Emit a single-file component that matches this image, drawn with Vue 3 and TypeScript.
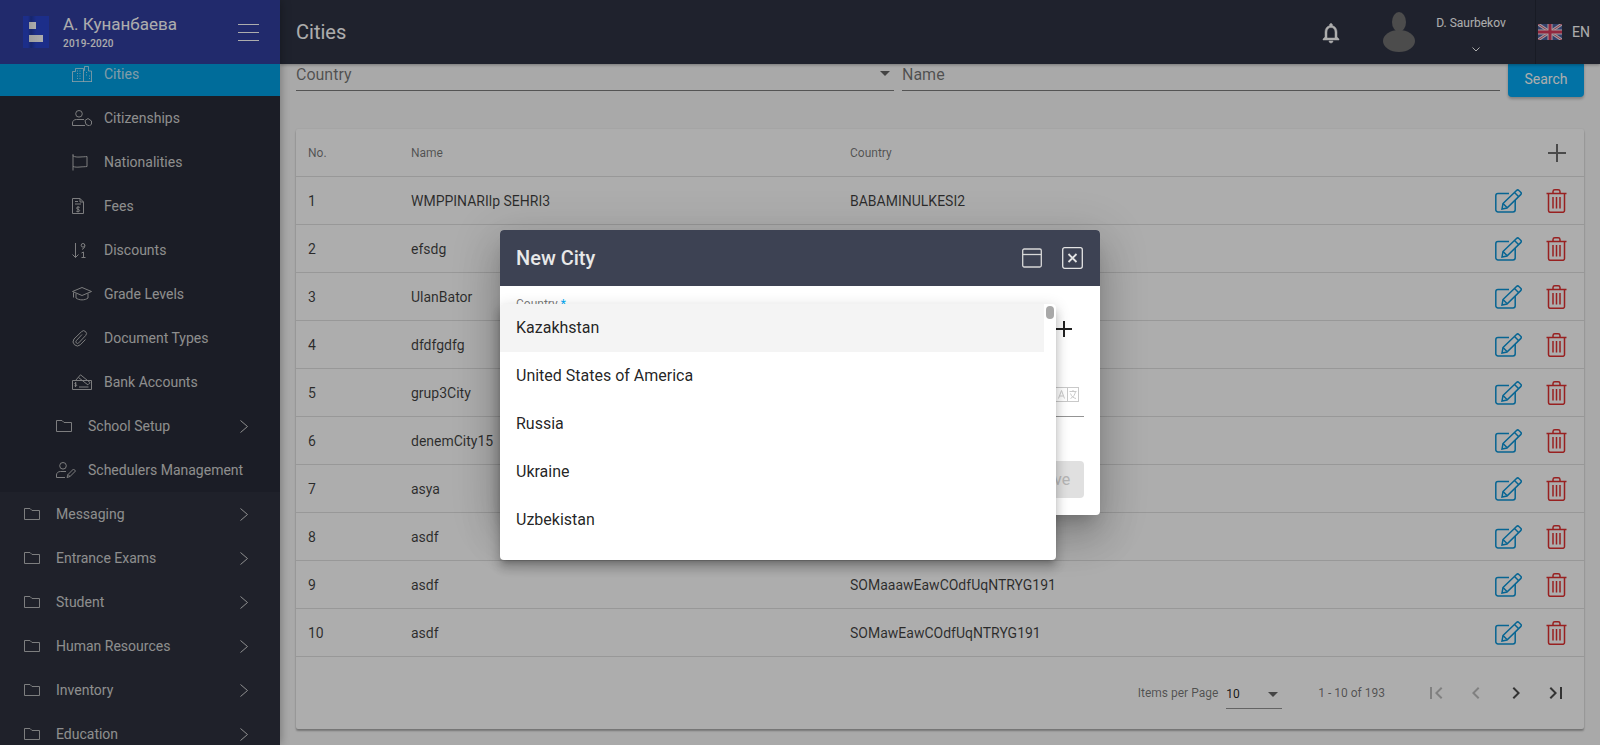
<script setup lang="ts">
interface NavItem {
  label: string;
  icon: string;
  level: number;
  arrow?: boolean;
  active?: boolean;
}

const iconPaths: Record<string, { box: string; w: number; h: number; d: string[] }> = {
  cities: {
    box: '0 0 20 16', w: 20, h: 16,
    d: ['M.5 16V5.5h3V2.5h8V16', 'M11.5 4.5h1V.5h4v4.5h3V16', 'M0 15.5h20', 'M5 5h1M7.5 5h1M5 7.5h1M7.5 7.5h1M5 10h1M7.5 10h1M5 12.5h1M7.5 12.5h1M14 6.5h1M14 9h1M17 10h1M17 12.5h1'],
  },
  citizen: {
    box: '0 0 20 16', w: 20, h: 16,
    d: ['M7 .5a3.3 3.3 0 1 1 0 6.6 3.3 3.3 0 0 1 0-6.6z', 'M12 9.5H4.5C2 9.5.5 11 .5 13v2.5H13', 'M13 10.5l3-2 3.5 2.5v3l-2 2-3.5-1.5z'],
  },
  flag: {
    box: '0 0 16 17', w: 16, h: 17,
    d: ['M1 .5v16', 'M.5 1h1', 'M1 2c2 1 4 1.200 7 1s5-.2 7-.5v10c-2 .3-4 .2-7 .5s-5 .2-7-.5'],
  },
  fees: {
    box: '0 0 12 16', w: 12, h: 16,
    d: ['M.5.5h7.500l3.500 3.500v11.500H.5z', 'M8 .5V4h3.500', 'M3 3.500h3M3 6h6', 'M7.800 9.500c-.5-.7-3.300-.8-3.300.6 0 1.500 3.300 1 3.200 2.600-.1 1.200-2.800 1.200-3.500.4M6 8.300v6'],
  },
  discounts: {
    box: '0 0 14 15', w: 14, h: 15,
    d: ['M3.500 0v14.500M.5 11.500l3 3 3-3', 'M11 .5a1.800 1.800 0 1 0 0 3.600 1.800 1.800 0 0 0 0-3.600zM12.800 2.300c0 2-1 3.700-2.800 4', 'M9.500 10l2-1v5.500M9.500 14.500h4'],
  },
  grade: {
    box: '0 0 20 14', w: 20, h: 14,
    d: ['M.5 4.500L10 .5l9.500 4-9.500 4z', 'M4 6.500v4.500c3 2.500 9 2.500 12 0V6.500', 'M1.500 5.500v5'],
  },
  clip: {
    box: '0 0 16 17', w: 16, h: 17,
    d: ['M10 4.500l-5.700 6.200a1.600 1.600 0 0 0 2.400 2.200l7-7.400a2.800 2.800 0 0 0-4.200-3.800L2 9a4.300 4.300 0 0 0 6.300 5.800l5.200-5.300'],
  },
  bank: {
    box: '0 0 20 16', w: 20, h: 16,
    d: ['M.5 6.500h19v9H.5z', 'M3.500 6.500L8.500.8l9.500 7.700-1.500 2', 'M6.500 3.500l9.500 7.500', 'M4.500 9c-.8-.4-2 .2-1.600 1 .4.800 2 .4 1.800 1.400-.2.800-1.500.8-2.200.3M3.500 8v5', 'M7 13h9.500'],
  },
  folder: {
    box: '0 0 16 12', w: 16, h: 12,
    d: ['M.5 11.500V.5h5.500l2 2h7.500v9z'],
  },
  scheduler: {
    box: '0 0 20 16', w: 20, h: 16,
    d: ['M7 .5a3.300 3.300 0 1 1 0 6.600 3.300 3.300 0 0 1 0-6.600z', 'M10 9.500H4.500C2 9.500.5 11 .5 13v2.500H9', 'M11 15.500l1-3 5.500-5.500 2 2-5.500 5.500z', 'M12 12.500l2 2'],
  },
};

const navItems: NavItem[] = [
  { label: 'Cities', icon: 'cities', level: 3, active: true },
  { label: 'Citizenships', icon: 'citizen', level: 3 },
  { label: 'Nationalities', icon: 'flag', level: 3 },
  { label: 'Fees', icon: 'fees', level: 3 },
  { label: 'Discounts', icon: 'discounts', level: 3 },
  { label: 'Grade Levels', icon: 'grade', level: 3 },
  { label: 'Document Types', icon: 'clip', level: 3 },
  { label: 'Bank Accounts', icon: 'bank', level: 3 },
  { label: 'School Setup', icon: 'folder', level: 2, arrow: true },
  { label: 'Schedulers Management', icon: 'scheduler', level: 2 },
];

const topItems: NavItem[] = ['Messaging', 'Entrance Exams', 'Student', 'Human Resources', 'Inventory', 'Education'].map(
  (label) => ({ label, icon: 'folder', level: 1, arrow: true }),
);

const rows = [
  { no: 1, name: 'WMPPINARIlp SEHRI3', country: 'BABAMINULKESI2' },
  { no: 2, name: 'efsdg', country: '' },
  { no: 3, name: 'UlanBator', country: '' },
  { no: 4, name: 'dfdfgdfg', country: '' },
  { no: 5, name: 'grup3City', country: '' },
  { no: 6, name: 'denemCity15', country: '' },
  { no: 7, name: 'asya', country: '' },
  { no: 8, name: 'asdf', country: '' },
  { no: 9, name: 'asdf', country: 'SOMaaawEawCOdfUqNTRYG191' },
  { no: 10, name: 'asdf', country: 'SOMawEawCOdfUqNTRYG191' },
];

const countries = ['Kazakhstan', 'United States of America', 'Russia', 'Ukraine', 'Uzbekistan', ''];

const pageIcons = [
  { d: 'M18.410 16.590L13.820 12l4.590-4.590L17 6l-6 6 6 6zM6 6h2v12H6z', off: true },
  { d: 'M15.410 7.410L14 6l-6 6 6 6 1.410-1.410L10.830 12z', off: true },
  { d: 'M10 6L8.590 7.410 13.170 12l-4.580 4.590L10 18l6-6z', off: false },
  { d: 'M5.590 7.410L10.180 12l-4.590 4.590L7 18l6-6-6-6zM16 6h2v12h-2z', off: false },
];
</script>

<template>
  <div class="app">
    <aside class="sidebar">
      <div class="brand">
        <div class="logo">
          <span class="logo__top"></span>
          <span class="logo__bottom"></span>
        </div>
        <div class="brand__text">
          <div class="brand__name">А. Кунанбаева</div>
          <div class="brand__years">2019-2020</div>
        </div>
        <div class="burger"><span></span><span></span><span></span></div>
      </div>
      <nav class="nav">
        <div class="nav__nested">
          <div
            v-for="item in navItems"
            :key="item.label"
            :class="['nav__item', 'nav__item--l' + item.level, { 'nav__item--active': item.active }]"
          >
            <span class="nav__icon">
              <svg :width="iconPaths[item.icon].w" :height="iconPaths[item.icon].h" :viewBox="iconPaths[item.icon].box" fill="none" stroke="currentColor">
                <path v-for="d in iconPaths[item.icon].d" :key="d" :d="d" />
              </svg>
            </span>
            <span>{{ item.label }}</span>
            <svg v-if="item.arrow" class="nav__arrow" width="8" height="13" viewBox="0 0 8 13" fill="none" stroke="currentColor">
              <path d="M.5.5l7 6-7 6" />
            </svg>
          </div>
        </div>
        <div v-for="item in topItems" :key="item.label" class="nav__item nav__item--l1">
          <span class="nav__icon">
            <svg :width="iconPaths[item.icon].w" :height="iconPaths[item.icon].h" :viewBox="iconPaths[item.icon].box" fill="none" stroke="currentColor">
              <path v-for="d in iconPaths[item.icon].d" :key="d" :d="d" />
            </svg>
          </span>
          <span>{{ item.label }}</span>
          <svg class="nav__arrow" width="8" height="13" viewBox="0 0 8 13" fill="none" stroke="currentColor">
            <path d="M.5.5l7 6-7 6" />
          </svg>
        </div>
      </nav>
    </aside>

    <div class="main">
      <header class="topbar">
        <div class="topbar__title">Cities</div>
        <svg class="bell" width="24" height="24" viewBox="0 0 24 24" fill="#fff" stroke="#fff" stroke-width="0.5">
          <path d="M12 22c1.100 0 2-.9 2-2h-4c0 1.100.89 2 2 2zm6-6v-5c0-3.070-1.640-5.640-4.500-6.320V4c0-.83-.67-1.500-1.500-1.500s-1.500.67-1.500 1.500v.68C7.630 5.360 6 7.920 6 11v5l-2 2v1h16v-1l-2-2zm-2 1H8v-6c0-2.480 1.510-4.500 4-4.500s4 2.020 4 4.500v6z" />
        </svg>
        <svg class="avatar" width="32" height="40" viewBox="0 0 32 40" fill="#707070">
          <ellipse cx="16" cy="10" rx="7" ry="10" />
          <ellipse cx="16" cy="29" rx="16" ry="11" />
        </svg>
        <div class="user">
          <div class="user__name">D. Saurbekov</div>
          <svg class="user__chevron" width="8" height="5" viewBox="0 0 8 5" fill="none" stroke="#fff">
            <path d="M.5.5L4 4 7.500.5" />
          </svg>
        </div>
        <div class="lang">
          <svg width="24" height="16" viewBox="0 0 24 16">
            <rect width="24" height="16" fill="#4a5f9e" />
            <path d="M0 0l24 16M24 0L0 16" stroke="#f3e6ea" stroke-width="3" />
            <path d="M0 0l24 16M24 0L0 16" stroke="#d0506c" stroke-width="1" />
            <path d="M12 0v16M0 8h24" stroke="#f3e6ea" stroke-width="5" />
            <path d="M12 0v16M0 8h24" stroke="#d83a5c" stroke-width="3" />
          </svg>
          <span>EN</span>
        </div>
      </header>

      <div class="content">
        <div class="filters">
          <div class="field">
            <span>Country</span>
            <i class="field__caret"></i>
          </div>
          <div class="field"><span>Name</span></div>
          <button class="search-btn">Search</button>
        </div>

        <section class="card">
          <div class="row row--head">
            <div>No.</div>
            <div>Name</div>
            <div>Country</div>
            <div class="row__actions row__actions--head">
              <svg width="20" height="20" viewBox="0 0 20 20" stroke="#6e6e6e" stroke-width="2">
                <path d="M10 1v18M1 10h18" />
              </svg>
            </div>
          </div>
          <div v-for="row in rows" :key="row.no" class="row">
            <div>{{ row.no }}</div>
            <div>{{ row.name }}</div>
            <div>{{ row.country }}</div>
            <div class="row__actions">
              <svg width="27" height="24" viewBox="0 0 27 24" fill="none" stroke="#0b95d8" stroke-width="1.500">
                <path d="M14 4.500H3a2.200 2.200 0 0 0-2.200 2.200v14a2.200 2.200 0 0 0 2.200 2.200h15a2.200 2.200 0 0 0 2.200-2.200V11" />
                <path d="M8 14.500L21.500 1.500a1.700 1.700 0 0 1 2.400 0l1.800 1.700a1.700 1.700 0 0 1 0 2.400L12 19l-5 1z" />
                <path d="M19.500 3.500l4 4M8 14.500l4 4" />
              </svg>
              <svg width="21" height="24" viewBox="0 0 21 24" fill="none" stroke="#e03030" stroke-width="1.500">
                <path d="M.5 4.500h20M7 4.500V2.500A1.800 1.800 0 0 1 8.800.8h3.400A1.800 1.800 0 0 1 14 2.500v2" />
                <path d="M2.500 4.500v17a1.800 1.800 0 0 0 1.800 1.800h12.400a1.800 1.800 0 0 0 1.800-1.800v-17" />
                <path d="M7 8v11.500M10.500 8v11.500M14 8v11.500" />
              </svg>
            </div>
          </div>
          <div class="pager">
            <span class="pager__label">Items per Page</span>
            <div class="pager__select">
              <span>10</span>
              <i class="pager__caret"></i>
            </div>
            <span class="pager__range">1 - 10 of 193</span>
            <svg
              v-for="icon in pageIcons"
              :key="icon.d"
              :class="['pager__btn', { 'pager__btn--off': icon.off }]"
              width="24"
              height="24"
              viewBox="0 0 24 24"
            >
              <path :d="icon.d" />
            </svg>
          </div>
        </section>
      </div>
    </div>

    <div class="backdrop">
      <div class="dialog">
        <div class="dialog__head">
          <span class="dialog__title">New City</span>
          <svg class="dialog__max" width="20" height="20" viewBox="0 0 20 20" fill="none" stroke="#d8d8d8" stroke-width="1.300">
            <rect x=".7" y="1" width="18.600" height="18" rx="1.500" />
            <path d="M.7 6.500h18.600" />
          </svg>
          <svg class="dialog__close" width="21" height="22" viewBox="0 0 21 22" fill="none" stroke="#e4e4e4" stroke-width="1.300">
            <rect x=".7" y=".7" width="19.600" height="20.600" rx="2" />
            <path d="M6.500 7l8 8M14.500 7l-8 8" stroke-width="1.800" />
          </svg>
        </div>
        <div class="dialog__body">
          <div class="form-label">Country <b>*</b></div>
          <div class="form-line">
            <svg class="form-plus" width="20" height="20" viewBox="0 0 20 20" stroke="#222" stroke-width="2">
              <path d="M10 2v16M2 10h16" />
            </svg>
          </div>
          <div class="form-name">
            <svg width="24" height="15" viewBox="0 0 24 15" fill="none" stroke="#c9c9c9">
              <rect x=".5" y=".5" width="12" height="14" />
              <rect x="12.500" y=".5" width="11" height="14" />
              <path d="M3.500 11.500l3-8 3 8M4.700 9h3.600M14.500 4.500h7M18 3v1.500M15.500 11.500c3-1.500 4.500-4 5-7M15.500 6.500c1 3 3 4.500 5.500 5" />
            </svg>
          </div>
          <div class="form-actions">
            <button class="save-btn" disabled>Save</button>
          </div>
        </div>
        <div class="select-panel">
          <div
            v-for="(country, i) in countries"
            :key="i"
            :class="['select-panel__option', { 'select-panel__option--active': i === 0 }]"
          >
            {{ country }}
          </div>
          <span class="select-panel__thumb"></span>
        </div>
      </div>
    </div>
  </div>
</template>

<style>
html,
body {
  margin: 0;
  overflow: hidden;
}
</style>

<style scoped>
.app {
  position: relative;
  display: flex;
  width: 100%;
  height: 100vh;
  overflow: hidden;
  background: #fafafa;
  font-family: Roboto, "Noto Sans", sans-serif;
  font-size: 14px;
}

.sidebar {
  flex: none;
  width: 280px;
  display: flex;
  flex-direction: column;
  background: #2e323f;
  box-shadow: 0 0 10px rgba(0, 0, 0, 0.35);
  z-index: 3;
}

.brand {
  flex: none;
  height: 64px;
  display: flex;
  align-items: center;
  background: #313e9f;
  color: #fff;
  box-sizing: border-box;
  padding-left: 23px;
}

.logo {
  position: relative;
  flex: none;
  width: 26px;
  height: 32px;
  background: linear-gradient(90deg, #2a44cc 0, #2a44cc 5px, #22389f 8px, #2a44cc 13px, #2a44cc 100%);
}

.logo__top,
.logo__bottom {
  position: absolute;
  left: 6px;
  height: 7px;
  background: linear-gradient(90deg, #e8e8e8, #fff);
}

.logo__top {
  top: 6px;
  width: 7px;
}

.logo__bottom {
  top: 19px;
  width: 14px;
}

.brand__text {
  margin-left: 14px;
  width: 175px;
}

.brand__name {
  font-size: 17px;
  line-height: 20px;
  margin-top: -1px;
}

.brand__years {
  font-size: 10px;
  font-weight: 500;
  line-height: 12px;
  margin-top: 4px;
  letter-spacing: 0.2px;
}

.burger {
  width: 21px;
  height: 17px;
  display: flex;
  flex-direction: column;
  justify-content: space-between;
}

.burger span {
  height: 1px;
  background: #fff;
}

.nav {
  flex: 1;
  min-height: 0;
  overflow: hidden;
  color: #d2d2d2;
}

.nav__nested {
  background: #292c38;
  margin-top: -12px;
}

.nav__item {
  height: 44px;
  display: flex;
  align-items: center;
  box-sizing: border-box;
  padding-right: 32px;
}

.nav__item--l1 {
  padding-left: 24px;
}

.nav__item--l2 {
  padding-left: 56px;
}

.nav__item--l3 {
  padding-left: 72px;
}

.nav__item--active {
  background: #009fe3;
  color: rgba(255, 255, 255, 0.75);
}

.nav__icon {
  flex: none;
  width: 32px;
  display: flex;
  align-items: center;
  opacity: 0.85;
}

.nav__arrow {
  margin-left: auto;
}

.main {
  flex: 1;
  min-width: 0;
  display: flex;
  flex-direction: column;
}

.topbar {
  position: relative;
  flex: none;
  height: 64px;
  display: flex;
  align-items: center;
  background: #2e3343;
  color: #fff;
  box-shadow: 0 1px 3px rgba(0, 0, 0, 0.3);
  z-index: 2;
}

.topbar__title {
  font-size: 20px;
  margin-left: 16px;
}

.bell {
  margin-left: auto;
  margin-top: 2px;
}

.avatar {
  margin-left: 40px;
}

.user {
  width: 120px;
  text-align: center;
  box-sizing: border-box;
  padding-right: 8px;
  align-self: stretch;
}

.user__name {
  font-size: 12px;
  line-height: 14px;
  margin-top: 16px;
}

.user__chevron {
  display: block;
  margin: 17px 0 0 57px;
}

.lang {
  width: 65px;
  align-self: stretch;
  display: flex;
  align-items: center;
  box-sizing: border-box;
  padding-left: 2px;
  gap: 10px;
  border-left: 1px solid rgba(0, 0, 0, 0.2);
}

.content {
  flex: 1;
  min-height: 0;
  padding: 0 16px;
}

.filters {
  display: flex;
  margin-top: -3px;
  gap: 8px;
}

.field {
  flex: 1;
  position: relative;
  height: 30px;
  box-sizing: border-box;
  border-bottom: 1px solid rgba(0, 0, 0, 0.5);
  padding-top: 4px;
  font-size: 16px;
  line-height: 19px;
  color: rgba(0, 0, 0, 0.54);
}

.field__caret {
  position: absolute;
  right: 4px;
  top: 10px;
  border: 5px solid transparent;
  border-top-color: rgba(0, 0, 0, 0.6);
  border-bottom: 0;
}

.search-btn {
  flex: none;
  width: 76px;
  height: 36px;
  border: 0;
  border-radius: 4px;
  background: #03a9f4;
  color: #fff;
  font: 14px Roboto, "Noto Sans", sans-serif;
  box-shadow: 0 2px 3px rgba(0, 0, 0, 0.25);
}

.card {
  margin-top: 32px;
  background: #fff;
  border-radius: 2px;
  box-shadow: 0 2px 2px rgba(0, 0, 0, 0.3), 0 0 2px rgba(0, 0, 0, 0.1);
}

.row {
  height: 48px;
  box-sizing: border-box;
  display: grid;
  grid-template-columns: 103px 439px 1fr 122px;
  align-items: center;
  padding-left: 12px;
  border-bottom: 1px solid rgba(0, 0, 0, 0.12);
  color: rgba(0, 0, 0, 0.75);
}

.row--head {
  font-size: 12px;
  color: rgba(0, 0, 0, 0.54);
}

.row__actions {
  display: flex;
  align-items: center;
  justify-content: flex-end;
  gap: 24px;
  padding-right: 17px;
}

.row__actions--head {
  padding-right: 17px;
}

.pager {
  display: flex;
  align-items: center;
  height: 72px;
  box-sizing: border-box;
  padding: 0 8px 0 0;
  justify-content: flex-end;
  font-size: 12px;
  color: rgba(0, 0, 0, 0.54);
}

.pager__select {
  position: relative;
  width: 56px;
  height: 30px;
  margin-left: 8px;
  box-sizing: border-box;
  padding-top: 8px;
  line-height: 14px;
  color: rgba(0, 0, 0, 0.87);
  border-bottom: 1px solid rgba(0, 0, 0, 0.42);
  margin-top: 1px;
}

.pager__caret {
  position: absolute;
  right: 4px;
  top: 13px;
  border: 5px solid transparent;
  border-top-color: rgba(0, 0, 0, 0.6);
  border-bottom: 0;
}

.pager__range {
  margin: 0 31px 0 36px;
}

.pager__btn {
  padding: 8px;
  fill: rgba(0, 0, 0, 0.7);
}

.pager__btn--off {
  fill: rgba(0, 0, 0, 0.26);
}

.backdrop {
  position: absolute;
  inset: 0;
  z-index: 10;
  display: flex;
  align-items: center;
  justify-content: center;
  background: rgba(0, 0, 0, 0.32);
}

.dialog {
  position: relative;
  width: 600px;
  height: 285px;
  background: #fff;
  border-radius: 4px;
  box-shadow: 0 11px 15px -7px rgba(0, 0, 0, 0.2), 0 24px 38px 3px rgba(0, 0, 0, 0.14), 0 9px 46px 8px rgba(0, 0, 0, 0.12);
}

.dialog__head {
  height: 56px;
  display: flex;
  align-items: center;
  box-sizing: border-box;
  padding: 0 17px 0 16px;
  background: #3d4253;
  border-radius: 4px 4px 0 0;
  color: #e8e8e8;
}

.dialog__title {
  font-size: 20px;
  font-weight: 500;
}

.dialog__max {
  margin-left: auto;
}

.dialog__close {
  margin-left: 20px;
}

.dialog__body {
  padding: 11px 16px 0;
}

.form-label {
  font-size: 12px;
  line-height: 14px;
  color: rgba(0, 0, 0, 0.54);
}

.form-label b {
  color: #03a9f4;
  font-weight: 400;
}

.form-line {
  height: 29px;
  display: flex;
  justify-content: flex-end;
  align-items: flex-start;
  padding-top: 8px;
  box-sizing: content-box;
}

.form-plus {
  margin-right: 10px;
}

.form-name {
  display: flex;
  justify-content: flex-end;
  align-items: flex-start;
  margin-top: 15px;
  padding: 24px 5px 0 0;
  box-sizing: border-box;
  height: 54px;
  border-bottom: 1px solid rgba(0, 0, 0, 0.42);
}

.form-actions {
  display: flex;
  justify-content: flex-end;
  margin-top: 44px;
}

.save-btn {
  width: 62px;
  height: 37px;
  border: 0;
  border-radius: 4px;
  background: #e0e0e0;
  color: #b5b5b5;
  font: 16px Roboto, "Noto Sans", sans-serif;
}

.select-panel {
  position: absolute;
  left: 0;
  top: 74px;
  width: 556px;
  height: 256px;
  overflow: hidden;
  background: #fff;
  border-radius: 4px;
  box-shadow: 0 5px 5px -3px rgba(0, 0, 0, 0.2), 0 8px 10px 1px rgba(0, 0, 0, 0.14), 0 3px 14px 2px rgba(0, 0, 0, 0.12);
}

.select-panel__option {
  width: 544px;
  height: 48px;
  box-sizing: border-box;
  padding-left: 16px;
  font-size: 16px;
  line-height: 48px;
  color: rgba(0, 0, 0, 0.87);
}

.select-panel__option--active {
  background: #f4f4f4;
}

.select-panel__thumb {
  position: absolute;
  right: 2px;
  top: 2px;
  width: 8px;
  height: 13px;
  border-radius: 4px;
  background: #a8a8a8;
}
</style>
